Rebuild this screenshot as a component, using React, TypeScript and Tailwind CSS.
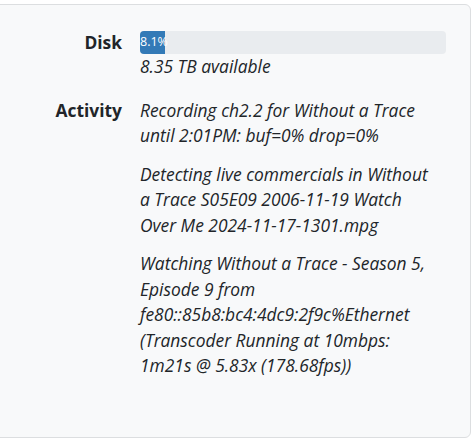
const activity = [
  ['Recording ch2.2 for Without a Trace', 'until 2:01PM: buf=0% drop=0%'],
  ['Detecting live commercials in Without', 'a Trace S05E09 2006-11-19 Watch', 'Over Me 2024-11-17-1301.mpg'],
  [
    'Watching Without a Trace - Season 5,',
    'Episode 9 from',
    'fe80::85b8:bc4:4dc9:2f9c%Ethernet',
    '(Transcoder Running at 10mbps:',
    '1m21s @ 5.83x (178.68fps))',
  ],
];

export default function App() {
  const used = 8.1;

  return (
    <div
      className="h-[447px] w-[473px] bg-white pt-[4px] text-[#212529]"
      style={{ fontFamily: '"Open Sans", "Noto Sans", sans-serif' }}
    >
      <div className="ml-[-6px] h-[434px] w-[477px] rounded-md border border-[#dcdee0] bg-[#f8f9fa] pt-[25px]">
        <div className="grid grid-cols-[121px_306px] gap-x-[18px] pl-[6px] text-[17.4px] leading-[25.5px]">
          <div className="text-right font-bold">Disk</div>
          <div>
            <div className="mt-[1px] flex h-[23px] w-[306px] overflow-hidden rounded-[4px] bg-[#e9ecef]">
              <div
                className="flex h-full items-center bg-[#337ab7] text-[12.5px] leading-none text-white"
                style={{ width: `${used}%` }}
              >
                {used}%
              </div>
            </div>
            <div className="italic">8.35 TB available</div>
          </div>

          <div className="mt-[18px] text-right font-bold">Activity</div>
          <div className="mt-[18px] flex flex-col gap-[13px] italic">
            {activity.map((lines) => (
              <p key={lines[0]} className="whitespace-nowrap">
                {lines.map((l) => (
                  <span key={l} className="block">
                    {l}
                  </span>
                ))}
              </p>
            ))}
          </div>
        </div>
      </div>
    </div>
  );
}
